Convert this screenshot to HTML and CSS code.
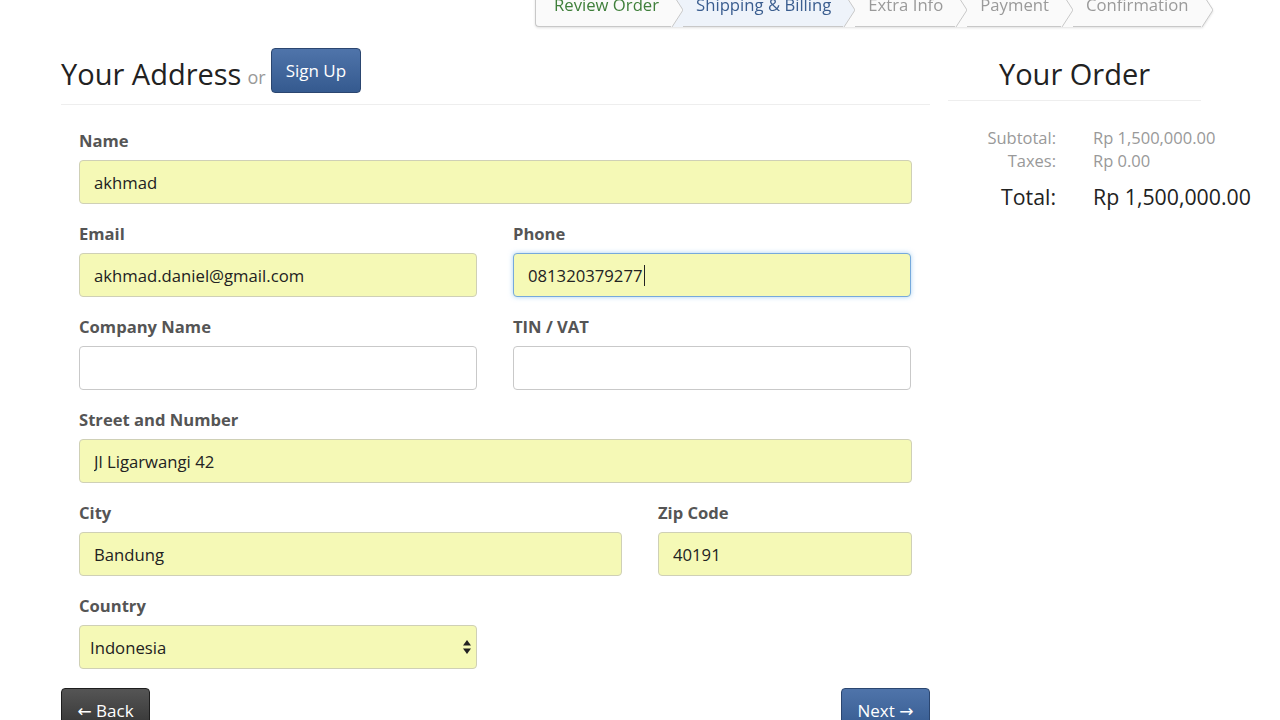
FILE: index.html
```html
<!DOCTYPE html>
<html lang="en">
<head>
  <meta charset="UTF-8" />
  <meta name="viewport" content="width=device-width, initial-scale=1.0" />
  <title>Checkout - Shipping &amp; Billing</title>
  <link rel="stylesheet" href="styles.css">
</head>
<body>
  <div class="topbar">
    <div class="steps">
      <div class="step done first">Review Order</div>
      <svg class="sep" viewBox="0 0 12 34"><rect width="12" height="34" fill="#eef3fa"/><polygon points="0,0 1,0 12,17 1,34 0,34" fill="#fafafa"/><polyline points="1,0 12,17 1,34" fill="none" stroke="#c8c8c8"/></svg>
      <div class="step active">Shipping &amp; Billing</div>
      <svg class="sep" viewBox="0 0 12 34"><rect width="12" height="34" fill="#fafafa"/><polygon points="0,0 1,0 12,17 1,34 0,34" fill="#eef3fa"/><polyline points="1,0 12,17 1,34" fill="none" stroke="#c8c8c8"/></svg>
      <div class="step">Extra Info</div>
      <svg class="sep" viewBox="0 0 12 34"><rect width="12" height="34" fill="#fafafa"/><polyline points="1,0 12,17 1,34" fill="none" stroke="#c8c8c8"/></svg>
      <div class="step">Payment</div>
      <svg class="sep" viewBox="0 0 12 34"><rect width="12" height="34" fill="#fafafa"/><polyline points="1,0 12,17 1,34" fill="none" stroke="#c8c8c8"/></svg>
      <div class="step">Confirmation</div>
      <svg class="sep" viewBox="0 0 12 34"><polygon points="0,0 1,0 12,17 1,34 0,34" fill="#fafafa"/><polyline points="1,0 12,17 1,34" fill="none" stroke="#c8c8c8"/></svg>
    </div>
  </div>

  <div class="page">
    <div class="main">
      <div class="header">
        <h2>Your Address</h2>
        <span class="or">or</span>
        <button class="btn btn-blue">Sign Up</button>
      </div>

      <form class="address">
        <div class="row">
          <div class="field full">
            <label>Name</label>
            <input class="filled" type="text" value="akhmad">
          </div>
        </div>
        <div class="row half">
          <div class="field">
            <label>Email</label>
            <input class="filled" type="text" value="akhmad.daniel@gmail.com">
          </div>
          <div class="field">
            <label>Phone</label>
            <div class="caret-wrap">
              <input class="filled focus" type="text" value="081320379277">
              <span class="caret"></span>
            </div>
          </div>
        </div>
        <div class="row half">
          <div class="field">
            <label>Company Name</label>
            <input type="text">
          </div>
          <div class="field">
            <label>TIN / VAT</label>
            <input type="text">
          </div>
        </div>
        <div class="row">
          <div class="field full">
            <label>Street and Number</label>
            <input class="filled" type="text" value="Jl Ligarwangi 42">
          </div>
        </div>
        <div class="row city">
          <div class="field">
            <label>City</label>
            <input class="filled" type="text" value="Bandung">
          </div>
          <div class="field">
            <label>Zip Code</label>
            <input class="filled" type="text" value="40191">
          </div>
        </div>
        <div class="row half">
          <div class="field">
            <label>Country</label>
            <div class="select-wrap">
              <select class="filled">
                <option>Indonesia</option>
              </select>
              <svg class="arrows" viewBox="0 0 8 14"><polygon points="4,0 8,5.5 0,5.5" fill="#222"/><polygon points="0,8.5 8,8.5 4,14" fill="#222"/></svg>
            </div>
          </div>
          <div class="field"></div>
        </div>
      </form>

      <div class="actions">
        <button class="btn btn-dark">&larr; Back</button>
        <button class="btn btn-blue">Next &rarr;</button>
      </div>
    </div>

    <div class="side">
      <h2 class="order-title">Your Order</h2>
      <div class="totals">
        <span class="key">Subtotal:</span><span class="val">Rp 1,500,000.00</span>
        <span class="key">Taxes:</span><span class="val">Rp 0.00</span>
        <span class="key big">Total:</span><span class="val big">Rp 1,500,000.00</span>
      </div>
    </div>
  </div>
</body>
</html>
```

FILE: styles.css
```css
body {
  margin: 0;
  font-family: 'Open Sans', 'Noto Sans', sans-serif;
  color: #222;
  background: #fff;
  overflow: hidden;
}

.topbar {
  display: flex;
  padding-left: 535px;
  margin-top: -7px;
}

.steps {
  display: flex;
  height: 34px;
  filter: drop-shadow(0 1px 1px rgba(0,0,0,0.12));
}

.step {
  line-height: 20px;
  font-size: 16.7px;
  padding: 2px 12px 0 13px;
  box-sizing: border-box;
  height: 34px;
  background: #fafafa;
  color: #9a9a9a;
  border-bottom: 1px solid #c8c8c8;
  white-space: nowrap;
}

.step.first {
  padding-left: 18px;
  border-left: 1px solid #c8c8c8;
  border-bottom-left-radius: 4px;
}

.step.done {
  color: #3f7f3a;
}

.step.active {
  background: #eef3fa;
  color: #3a5d8f;
}

.sep {
  width: 12px;
  height: 34px;
  display: block;
}

.page {
  display: flex;
  gap: 18px;
  padding-left: 61px;
}

.main {
  width: 869px;
}

.header {
  display: flex;
  align-items: center;
  height: 66px;
  margin-top: 12px;
  border-bottom: 1px solid #eee;
  padding-bottom: 3px;
  box-sizing: border-box;
}

h2 {
  margin: 0;
  font-weight: 400;
  font-size: 29px;
  color: #222;
}

.header h2 {
  margin-top: 6px;
}

.or {
  color: #999;
  font-size: 18px;
  margin: 14px 6px 0 6px;
}

.btn {
  font-family: 'Open Sans', 'DejaVu Sans', sans-serif;
  font-size: 17px;
  color: #fff;
  border-radius: 4px;
  height: 45px;
  padding: 0 14px;
  cursor: pointer;
}

.header .btn {
  margin-top: 1px;
  margin-left: -1px;
}

.actions .btn {
  width: 89px;
  padding: 0;
  height: 44px;
}

.btn-blue {
  background: linear-gradient(to bottom, #4f74aa, #355a8f);
  border: 1px solid #2b4670;
}

.btn-dark {
  background: linear-gradient(to bottom, #555, #333);
  border: 1px solid #1e1e1e;
}

.address {
  padding: 25px 18px 0;
}

.row {
  display: flex;
  gap: 36px;
  margin-bottom: 19px;
}

.row.half .field {
  width: 398px;
}

.row.city .field:first-child {
  width: 543px;
}

.row.city .field:last-child {
  width: 254px;
}

.field.full {
  width: 833px;
}

label {
  display: block;
  font-weight: 700;
  font-size: 16.6px;
  line-height: 22px;
  color: #555;
  margin-bottom: 8px;
}

input, select {
  display: block;
  width: 100%;
  height: 44px;
  box-sizing: border-box;
  border: 1px solid #c9c9c9;
  border-radius: 4px;
  padding: 1px 14px 0;
  font-family: 'Open Sans', sans-serif;
  font-size: 16.7px;
  color: #222;
  background: #fff;
  outline: none;
}

.filled {
  background: #f5f9b6;
  border-color: #cfd0b6;
}

.focus {
  border-color: #76a9dc;
  box-shadow: 0 0 5px rgba(102,175,233,0.55);
}

.caret-wrap,
.select-wrap {
  position: relative;
}

.caret {
  position: absolute;
  left: 131px;
  top: 12px;
  width: 1px;
  height: 21px;
  background: #222;
}

select {
  appearance: none;
  -webkit-appearance: none;
  padding-left: 10px;
}

.arrows {
  position: absolute;
  right: 6px;
  top: 15px;
  width: 8px;
  height: 14px;
}

.actions {
  display: flex;
  justify-content: space-between;
}

.side {
  width: 253px;
}

.order-title {
  text-align: center;
  height: 62px;
  margin-top: 12px;
  padding-top: 15px;
  line-height: 40px;
  border-bottom: 1px solid #eee;
  box-sizing: border-box;
}

.totals {
  display: grid;
  grid-template-columns: 108px auto;
  column-gap: 37px;
  margin-top: 25px;
  font-size: 16.5px;
  line-height: 23px;
  color: #999;
  white-space: nowrap;
}

.key {
  text-align: right;
}

.big {
  font-size: 21.3px;
  color: #222;
  margin-top: 11px;
  line-height: 28px;
}
```
